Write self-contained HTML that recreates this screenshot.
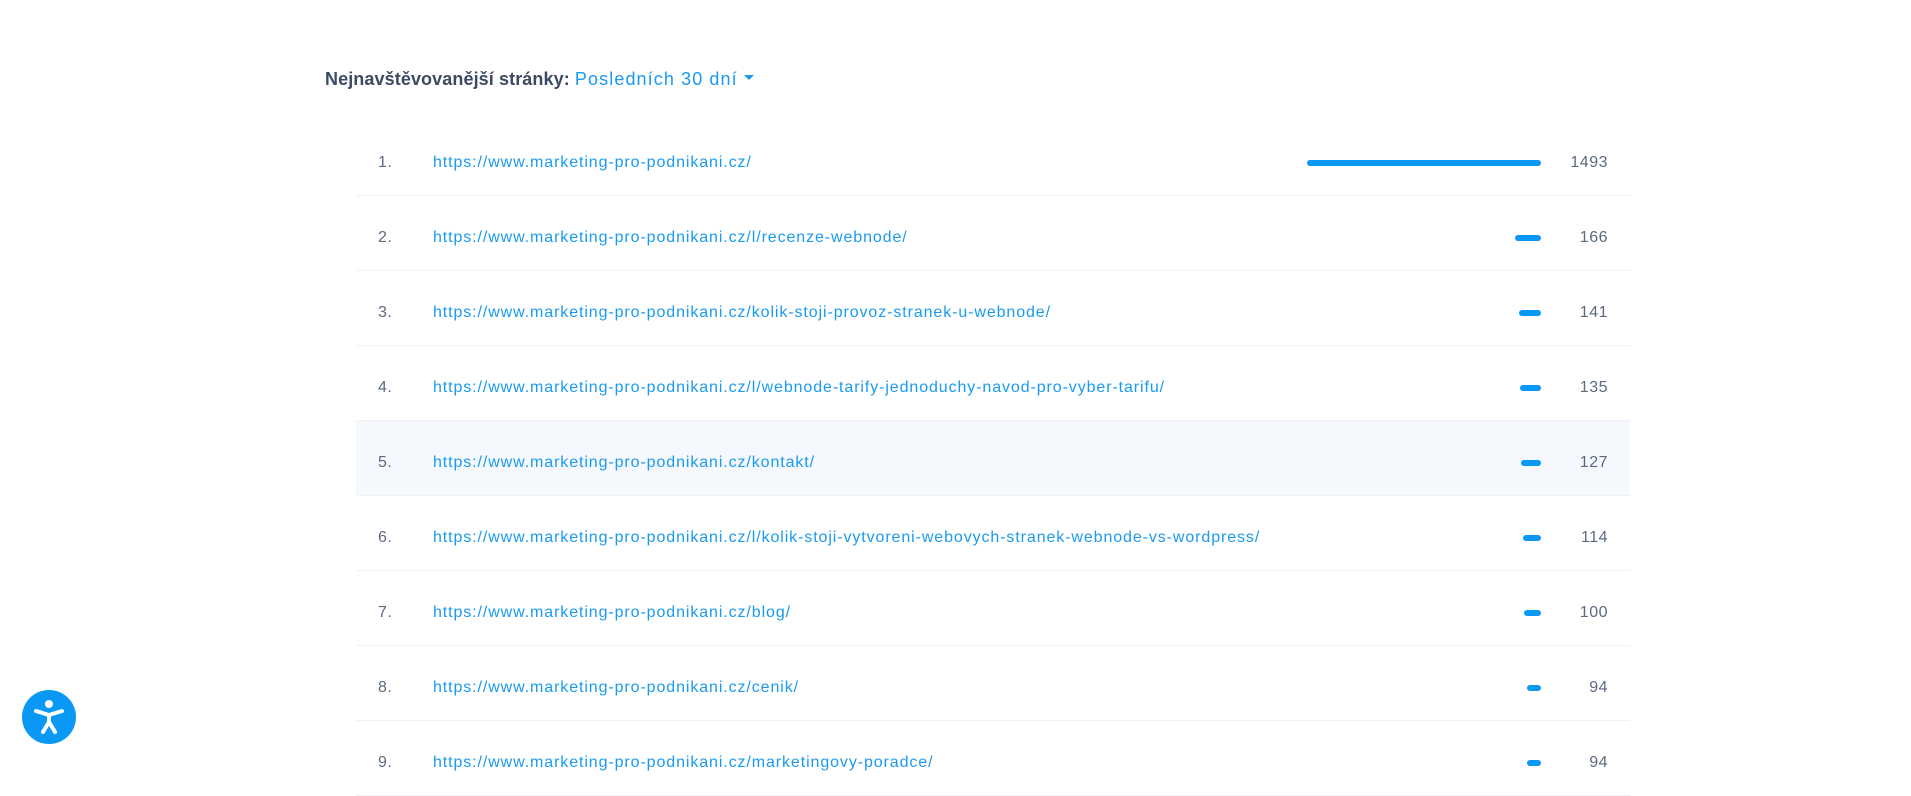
<!DOCTYPE html>
<html><head><meta charset="utf-8">
<style>
html,body{margin:0;padding:0;background:#fff;width:1911px;height:759px;overflow:hidden;font-family:"Liberation Sans",sans-serif;}
.title{position:absolute;left:325px;top:69px;font-size:18px;color:#3d4a63;font-weight:bold;letter-spacing:0.1px}
.title span{font-weight:normal;color:#1a9af0;letter-spacing:1.1px}
.caret{display:inline-block;width:0;height:0;border-left:5px solid transparent;border-right:5px solid transparent;border-top:5px solid #1a9af0;vertical-align:middle;margin-left:6px;position:relative;top:-3px}
.table{position:absolute;left:356px;top:121px;width:1274px}
.row{position:relative;height:74px;border-bottom:1px solid #eef0f3;font-size:16px}
.row.hl{background:#f5f9fe}
.num{position:absolute;left:22px;top:33px;color:#5b6a82;letter-spacing:0.5px}
.url{position:absolute;left:77px;top:33px;color:#1a9af0;letter-spacing:0.9px;white-space:nowrap}
.bar{position:absolute;right:89px;top:39px;height:6px;border-radius:3px;background:#0a98f5}
.cnt{position:absolute;right:22px;top:33px;color:#5b6a82;letter-spacing:0.5px}
.acc{position:absolute;left:22px;top:690px;width:54px;height:54px;border-radius:50%;background:#0a98f5}
</style></head><body>
<div class="title">Nejnavštěvovanější stránky: <span>Posledních 30 dní</span><i class="caret"></i></div>
<div class="table">
<div class="row"><div class="num">1.</div><div class="url">https://www.marketing-pro-podnikani.cz/</div><div class="bar" style="width:234px"></div><div class="cnt">1493</div></div>
<div class="row"><div class="num">2.</div><div class="url">https://www.marketing-pro-podnikani.cz/l/recenze-webnode/</div><div class="bar" style="width:26px"></div><div class="cnt">166</div></div>
<div class="row"><div class="num">3.</div><div class="url">https://www.marketing-pro-podnikani.cz/kolik-stoji-provoz-stranek-u-webnode/</div><div class="bar" style="width:22px"></div><div class="cnt">141</div></div>
<div class="row"><div class="num">4.</div><div class="url">https://www.marketing-pro-podnikani.cz/l/webnode-tarify-jednoduchy-navod-pro-vyber-tarifu/</div><div class="bar" style="width:21px"></div><div class="cnt">135</div></div>
<div class="row hl"><div class="num">5.</div><div class="url">https://www.marketing-pro-podnikani.cz/kontakt/</div><div class="bar" style="width:20px"></div><div class="cnt">127</div></div>
<div class="row"><div class="num">6.</div><div class="url">https://www.marketing-pro-podnikani.cz/l/kolik-stoji-vytvoreni-webovych-stranek-webnode-vs-wordpress/</div><div class="bar" style="width:18px"></div><div class="cnt">114</div></div>
<div class="row"><div class="num">7.</div><div class="url">https://www.marketing-pro-podnikani.cz/blog/</div><div class="bar" style="width:17px"></div><div class="cnt">100</div></div>
<div class="row"><div class="num">8.</div><div class="url">https://www.marketing-pro-podnikani.cz/cenik/</div><div class="bar" style="width:14px"></div><div class="cnt">94</div></div>
<div class="row"><div class="num">9.</div><div class="url">https://www.marketing-pro-podnikani.cz/marketingovy-poradce/</div><div class="bar" style="width:14px"></div><div class="cnt">94</div></div>
</div>
<div class="acc"><svg width="54" height="54" viewBox="0 0 54 54"><circle cx="27" cy="14" r="4" fill="#fff"/><path d="M14 21 L27 25 L40 21 M27 25 L27 32 M27 32 L21 42 M27 32 L33 42" stroke="#fff" stroke-width="4" stroke-linecap="round" stroke-linejoin="round" fill="none"/></svg></div>
</body></html>
